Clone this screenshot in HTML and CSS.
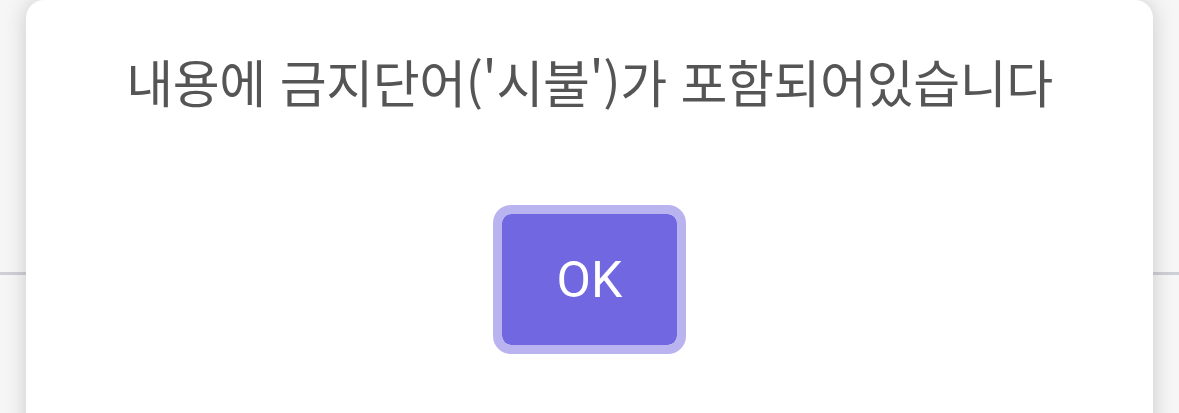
FILE: index.html
```html
<!DOCTYPE html>
<html lang="ko">
<head>
    <meta charset="UTF-8">
    <meta name="viewport" content="width=device-width, initial-scale=1.0">
    <title>알림</title>
    <link rel="stylesheet" href="styles.css">
</head>
<body>
    <div class="alert-box">
        <p class="alert-message">내용에 금지단어('시불')가 포함되어있습니다</p>
        <div class="alert-actions">
            <button class="alert-ok" type="button">OK</button>
        </div>
    </div>
</body>
</html>
```

FILE: styles.css
```css
* {
    margin: 0;
    padding: 0;
    box-sizing: border-box;
}

html, body {
    height: 100%;
}

body {
    font-family: Roboto, "Noto Sans CJK KR", sans-serif;
    /* page behind the dialog: faint divider across it */
    background:
        linear-gradient(to bottom, transparent 272px, #cfcfd6 272px, #cfcfd6 275px, transparent 275px),
        #f6f6f6;
    overflow: hidden;
    display: flex;
    justify-content: center;
}

/* Alert dialog */
.alert-box {
    width: 1127px;
    height: 460px;
    background: #fff;
    border-radius: 18px;
    box-shadow: 0 0 22px rgba(0, 0, 0, 0.18);
    padding-top: 48px;
    display: flex;
    flex-direction: column;
    align-items: center;
}

.alert-message {
    font-family: "Noto Sans CJK KR", Roboto, sans-serif;
    font-size: 51px;
    line-height: 66px;
    color: #555;
    letter-spacing: -0.4px;
}

.alert-actions {
    margin-top: 91px;
}

.alert-ok {
    width: 193px;
    height: 149px;
    border: 9px solid #b9b3f0;
    border-radius: 18px;
    background: #7168e1;
    background-clip: padding-box;
    color: #fff;
    font-family: Roboto, "Liberation Sans", sans-serif;
    font-size: 50px;
    cursor: pointer;
}
```
